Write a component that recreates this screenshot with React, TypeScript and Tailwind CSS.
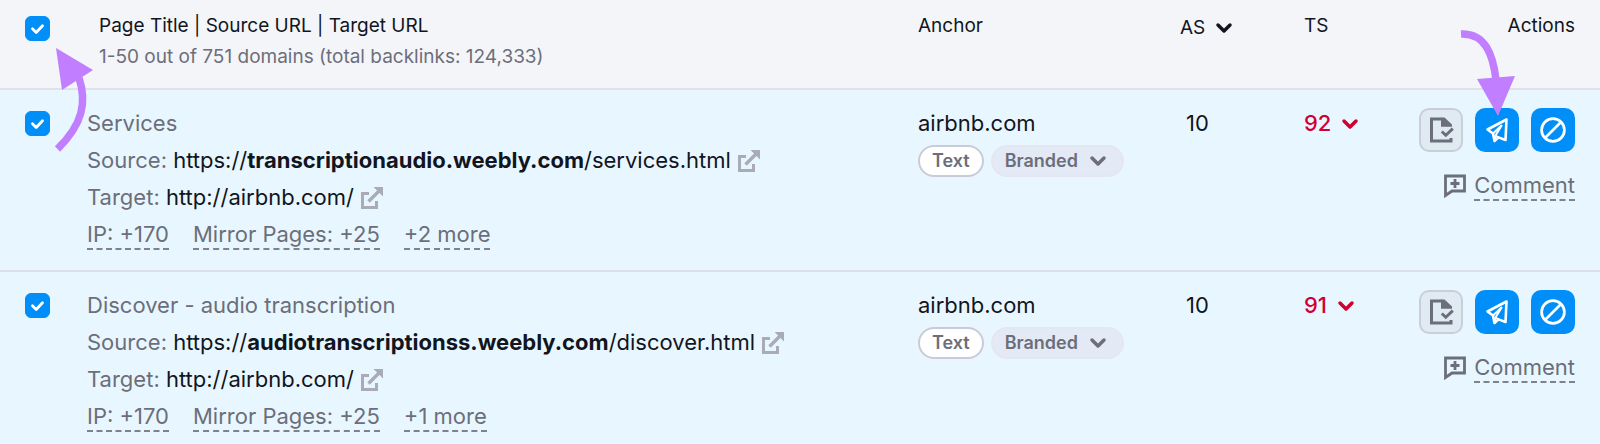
import { ChevronDown } from "lucide-react";

const backlinks = [
  {
    title: "Services",
    domain: "transcriptionaudio.weebly.com",
    path: "/services.html",
    target: "http://airbnb.com/",
    more: "+2 more",
    anchor: "airbnb.com",
    as: 10,
    ts: 92,
  },
  {
    title: "Discover - audio transcription",
    domain: "audiotranscriptionss.weebly.com",
    path: "/discover.html",
    target: "http://airbnb.com/",
    more: "+1 more",
    anchor: "airbnb.com",
    as: 10,
    ts: 91,
  },
];

function Checkbox({ label }: { label: string }) {
  return (
    <label className="grid size-[25px] place-items-center">
      <input
        type="checkbox"
        defaultChecked
        aria-label={label}
        className="peer col-start-1 row-start-1 size-[25px] appearance-none rounded-md border border-[#a9abb6] bg-white checked:border-[#008ff8] checked:bg-[#008ff8]"
      />
      <svg
        aria-hidden
        viewBox="0 0 25 25"
        className="pointer-events-none invisible col-start-1 row-start-1 size-[25px] peer-checked:visible"
      >
        <path d="M7.5 12.8l3.7 3.7 6.3-6.8" fill="none" stroke="#fff" strokeWidth="2.8" strokeLinecap="round" strokeLinejoin="round" />
      </svg>
    </label>
  );
}

function ExternalIcon() {
  return (
    <svg aria-hidden viewBox="0 0 22 22" className="size-[22px]" fill="none" stroke="#a9abb6" strokeWidth="3">
      <path d="M8 6.5H1.5v14h14V14" />
      <path d="M7.5 14.5L19 3" strokeWidth="3.4" />
      <path d="M12.5 0H22v9.5l-3.2-3.3-3-3z" fill="#a9abb6" stroke="none" />
    </svg>
  );
}

function CheckedFileIcon() {
  return (
    <svg aria-hidden viewBox="0 0 25 26" className="h-[26px] w-[25px]" fill="none" stroke="#6c6e79" strokeWidth="3">
      <path d="M13 2H2.5v22h19.500V21" />
      <path d="M12 .5h3.5L23 7.500v2.200H12z" fill="#6c6e79" stroke="none" />
      <path d="M12.8 14.500l4 3.800 7-6.600" />
    </svg>
  );
}

function SendIcon() {
  return (
    <svg aria-hidden viewBox="0 0 24 26" className="h-[26px] w-6" fill="none" stroke="#fff" strokeWidth="2.6" strokeLinejoin="round">
      <path d="M21.500 2.500L2.500 12.500l5.500 4 1.500 7.500 4-3.600 7 2.600z" />
      <path d="M17 8L8 16.500M17 8l-6.500 10.500 3 1.800M9.500 24l1-5.500" strokeWidth="2" />
    </svg>
  );
}

function BlockIcon() {
  return (
    <svg aria-hidden viewBox="0 0 26 26" className="size-[26px]" fill="none" stroke="#fff" strokeWidth="2.7">
      <circle cx="13" cy="13" r="11.4" />
      <path d="M5.5 20.5l15-15" />
    </svg>
  );
}

function CommentIcon() {
  return (
    <svg aria-hidden viewBox="0 0 22 24" className="h-6 w-[22px]" fill="none" stroke="#6c6e79" strokeWidth="2.8">
      <path d="M1.5 2h19v15H8l-6.5 4.5z" />
      <path d="M11 5v9M6.5 9.5h9" />
    </svg>
  );
}

const metaButton = "border-b-2 border-dashed border-[#7f828d] leading-7";

export default function App() {
  return (
    <main className="relative overflow-hidden bg-[#e8f7ff] font-['Inter','Liberation_Sans',sans-serif] text-[22px] text-[#121520]">
      <table className="w-full table-fixed border-collapse text-left">
        <colgroup>
          <col className="w-[87px]" />
          <col />
          <col className="w-[262px]" />
          <col className="w-[124px]" />
          <col className="w-[110px]" />
          <col className="w-[186px]" />
        </colgroup>
        <thead className="bg-[#f4f5f9] text-[19px] leading-[31px]">
          <tr className="h-[89px] border-b-2 border-[#e0e1e9] align-top">
            <th className="pt-4 pl-[25px]">
              <Checkbox label="Select all backlinks" />
            </th>
            <th className="pt-[10px] pl-3 font-normal">
              <p>Page Title | Source URL | Target URL</p>
              <p className="text-[#6c6e79]">1-50 out of 751 domains (total backlinks: 124,333)</p>
            </th>
            <th className="pt-[10px] font-normal">Anchor</th>
            <th className="pt-3 font-normal">
              <button className="flex items-center gap-[7px]">
                AS
                <ChevronDown aria-hidden className="size-6" strokeWidth={3.5} />
              </button>
            </th>
            <th className="pt-[10px] font-normal">TS</th>
            <th className="pt-[10px] pr-[25px] text-right font-normal">Actions</th>
          </tr>
        </thead>
        <tbody>
          {backlinks.map((link) => (
            <tr key={link.domain} className="h-[182px] border-b-2 border-[#dcdfea] align-top leading-[37px] last:border-b-0">
              <td className="pt-[21px] pl-[25px]">
                <Checkbox label={`Select ${link.title}`} />
              </td>
              <td className="pt-[15px] whitespace-nowrap">
                <p className="text-[#6c6e79]">{link.title}</p>
                <p className="flex items-center gap-[7px]">
                  <span>
                    <span className="text-[#6c6e79]">Source: </span>
                    <a href={`https://${link.domain}${link.path}`}>
                      https://<b>{link.domain}</b>
                      {link.path}
                    </a>
                  </span>
                  <ExternalIcon />
                </p>
                <p className="flex items-center gap-[7px]">
                  <span>
                    <span className="text-[#6c6e79]">Target: </span>
                    <a href={link.target}>{link.target}</a>
                  </span>
                  <ExternalIcon />
                </p>
                <div className="flex h-[37px] items-center gap-6 text-[#6c6e79]">
                  <button className={metaButton}>IP: +170</button>
                  <button className={metaButton}>Mirror Pages: +25</button>
                  <button className={metaButton}>{link.more}</button>
                </div>
              </td>
              <td className="pt-[15px]">
                <p>{link.anchor}</p>
                <div className="mt-[3px] flex gap-[7px] text-[18px] leading-7 font-semibold text-[#6c6e79]">
                  <span className="rounded-full border-2 border-[#c9ccd6] bg-white px-3">Text</span>
                  <button className="flex items-center gap-2 rounded-full border-2 border-[#e4e6f1] bg-[#e4eaf5] px-3">
                    Branded
                    <ChevronDown aria-hidden className="size-6" strokeWidth={3.5} />
                  </button>
                </div>
              </td>
              <td className="pt-[15px] pl-[6px]">{link.as}</td>
              <td className="pt-[15px]">
                <button className="flex items-center gap-[7px] font-medium text-[#d1002f]">
                  {link.ts}
                  <ChevronDown aria-hidden className="size-6" strokeWidth={3.5} />
                </button>
              </td>
              <td className="pt-[18px] pr-[25px]">
                <div className="flex justify-end gap-3">
                  <button aria-label="Mark as reviewed" className="grid size-11 place-items-center rounded-[10px] border-2 border-[#c9ced9] bg-[#e0eaf3]">
                    <CheckedFileIcon />
                  </button>
                  <button aria-label="Send to list" className="grid size-11 place-items-center rounded-[10px] bg-[#008ff8]">
                    <SendIcon />
                  </button>
                  <button aria-label="Disavow" className="grid size-11 place-items-center rounded-[10px] bg-[#008ff8]">
                    <BlockIcon />
                  </button>
                </div>
                <div className="mt-[19px] flex items-center justify-end gap-2 text-[#6c6e79]">
                  <CommentIcon />
                  <button className={metaButton}>Comment</button>
                </div>
              </td>
            </tr>
          ))}
        </tbody>
      </table>

      <svg aria-hidden viewBox="0 0 44 108" className="pointer-events-none absolute top-12 left-[52px] h-[108px] w-11">
        <path d="M4 0l37 22-31 20z" fill="#c17fff" />
        <path d="M27 30c8 24 4 46-21.500 71" fill="none" stroke="#c17fff" strokeWidth="7.5" />
      </svg>
      <svg aria-hidden viewBox="0 0 60 90" className="pointer-events-none absolute top-7 right-[82px] h-[90px] w-[60px]">
        <path d="M19 51l38-3-17 40z" fill="#c17fff" />
        <path d="M3 6c24-1 32 20 35 46" fill="none" stroke="#c17fff" strokeWidth="7.5" />
      </svg>
    </main>
  );
}
